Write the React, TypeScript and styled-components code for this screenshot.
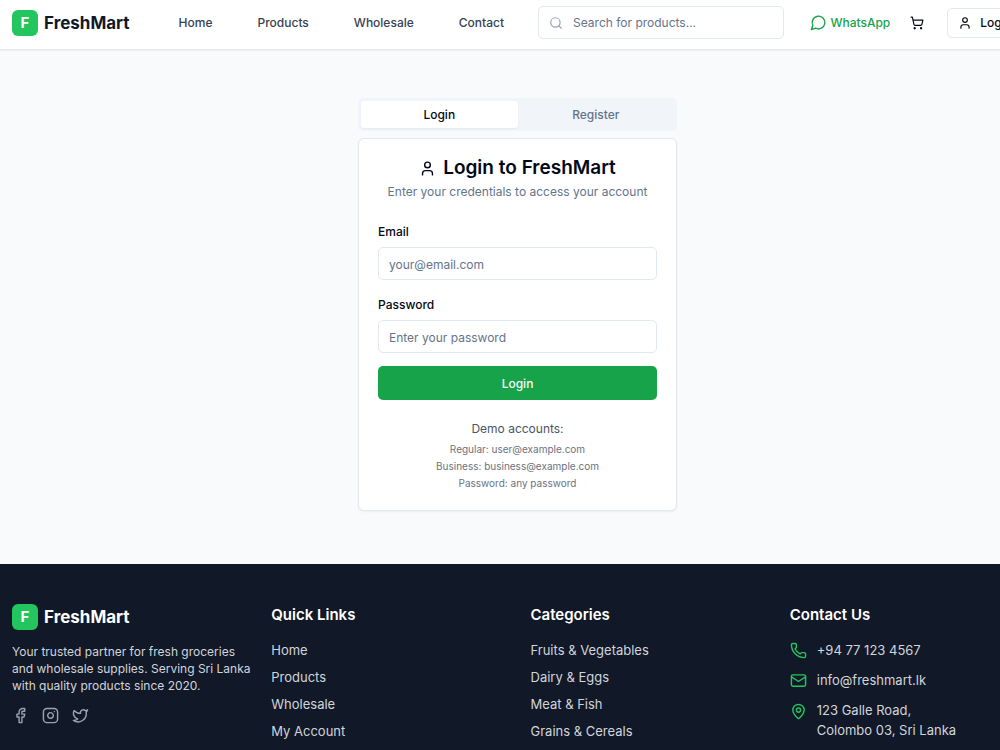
import React from "react";
import styled, { createGlobalStyle } from "styled-components";
import {
  Facebook,
  Instagram,
  Mail,
  MapPin,
  Phone,
  Search,
  ShoppingCart,
  Twitter,
  User,
} from "lucide-react";

const GlobalStyle = createGlobalStyle`
  *, *::before, *::after { box-sizing: border-box; }
  body {
    margin: 0;
    overflow-x: hidden;
    background: #f8fafc;
    color: #020817;
    font-family: Inter, "Liberation Sans", sans-serif;
    font-size: 12px;
    line-height: 17px;
  }
  h1, h2, p, ul { margin: 0; padding: 0; }
  ul { list-style: none; }
  a { color: inherit; text-decoration: none; }
  button, input { font: inherit; color: inherit; }
  svg { display: block; flex-shrink: 0; }
`;

const Page = styled.div`
  min-width: 1035px;
`;

const Header = styled.header`
  display: flex;
  align-items: center;
  height: 50px;
  padding: 0 12px 4px;
  background: #ffffff;
  border-bottom: 1px solid #e5e7eb;
  box-shadow: 0 1px 2px rgba(0, 0, 0, 0.05);
`;

const Brand = styled.a<{ $light?: boolean }>`
  display: flex;
  align-items: center;
  gap: 6px;
  color: ${(p) => (p.$light ? "#ffffff" : "#111827")};
  font-size: 17px;
  font-weight: 700;
  line-height: 24px;
`;

const BrandMark = styled.span`
  display: grid;
  place-items: center;
  width: 26px;
  height: 26px;
  border-radius: 6px;
  background: #22c55e;
  color: #ffffff;
  font-size: 15px;
`;

const Nav = styled.nav`
  display: flex;
  gap: 45px;
  margin: 0 34px 0 49px;
  color: #374151;
  font-weight: 500;
`;

const SearchBox = styled.label`
  display: flex;
  flex: 1;
  align-items: center;
  gap: 10px;
  height: 33px;
  padding: 0 10px;
  border: 1px solid #e2e8f0;
  border-radius: 5px;
  color: #9ca3af;
`;

const SearchInput = styled.input`
  flex: 1;
  min-width: 0;
  padding: 0;
  border: 0;
  outline: 0;
  background: transparent;
  color: #020817;
  &::placeholder { color: #64748b; opacity: 1; }
`;

const Actions = styled.div`
  display: flex;
  align-items: center;
  margin-left: 26px;
`;

const WhatsApp = styled.a`
  display: flex;
  align-items: center;
  gap: 3px;
  color: #16a34a;
  font-weight: 500;
`;

const CartButton = styled.button`
  display: grid;
  place-items: center;
  width: 34px;
  height: 30px;
  margin: 0 13px 0 10px;
  padding: 0;
  border: 0;
  background: transparent;
`;

const AccountButton = styled.button`
  display: flex;
  align-items: center;
  gap: 8px;
  height: 30px;
  padding: 0 10px;
  border: 1px solid #e2e8f0;
  border-radius: 5px;
  background: #ffffff;
  font-weight: 500;
`;

const Main = styled.main`
  display: flex;
  flex-direction: column;
  gap: 7px;
  width: 319px;
  margin: 0 auto;
  padding: 48px 0 53px;
`;

const Tabs = styled.div`
  display: grid;
  grid-template-columns: 1fr 1fr;
  height: 33px;
  padding: 3px;
  border-radius: 5px;
  background: #f1f5f9;
`;

const Tab = styled.button<{ $active?: boolean }>`
  padding: 0;
  border: 0;
  border-radius: 3px;
  background: ${(p) => (p.$active ? "#ffffff" : "transparent")};
  box-shadow: ${(p) => (p.$active ? "0 1px 2px rgba(0, 0, 0, 0.05)" : "none")};
  color: ${(p) => (p.$active ? "#020817" : "#64748b")};
  font-weight: 500;
`;

const Card = styled.section`
  padding: 19px 19px 18px;
  border: 1px solid #e2e8f0;
  border-radius: 6px;
  background: #ffffff;
  box-shadow: 0 1px 2px rgba(0, 0, 0, 0.05);
`;

const CardHead = styled.div`
  display: flex;
  flex-direction: column;
  align-items: center;
  gap: 5px;
  margin-bottom: 20px;
  color: #64748b;
`;

const CardTitle = styled.h1`
  display: flex;
  align-items: center;
  gap: 7px;
  color: #020817;
  font-size: 19px;
  font-weight: 600;
  line-height: 20px;
`;

const Form = styled.form`
  display: flex;
  flex-direction: column;
  gap: 13px;
`;

const Field = styled.div`
  display: flex;
  flex-direction: column;
  gap: 6px;
`;

const Label = styled.label`
  padding-top: 2px;
  font-weight: 500;
  line-height: 19px;
`;

const TextInput = styled.input`
  width: 100%;
  height: 33px;
  padding: 1px 10px 0;
  border: 1px solid #e2e8f0;
  border-radius: 5px;
  background: #ffffff;
  &::placeholder { color: #64748b; opacity: 1; }
`;

const Submit = styled.button`
  height: 34px;
  padding: 0;
  border: 0;
  border-radius: 5px;
  background: #16a34a;
  color: #f8fafc;
  font-weight: 500;
`;

const Demo = styled.div`
  margin-top: 20px;
  color: #4b5563;
  text-align: center;
`;

const DemoList = styled.ul`
  margin-top: 4px;
  color: #6b7280;
  font-size: 10px;
`;

const Footer = styled.footer`
  display: grid;
  grid-template-columns: repeat(4, 1fr);
  gap: 26px;
  padding: 40px 12px 9px;
  background: #111827;
  color: #d1d5db;
  border-bottom: 1px solid #030712;
`;

const About = styled.div`
  display: flex;
  flex-direction: column;
  gap: 13px;
  min-width: 0;
  white-space: nowrap;
`;

const Socials = styled.div`
  display: flex;
  gap: 13px;
  color: #9ca3af;
`;

const FooterTitle = styled.h2`
  margin-bottom: 15px;
  color: #ffffff;
  font-size: 15px;
  font-weight: 600;
  line-height: 21px;
`;

const FooterList = styled.ul<{ $gap: number }>`
  display: flex;
  flex-direction: column;
  gap: ${(p) => p.$gap}px;
  font-size: 13px;
  line-height: 20px;
`;

const ContactItem = styled.li<{ $top?: boolean }>`
  display: flex;
  align-items: ${(p) => (p.$top ? "flex-start" : "center")};
  gap: 10px;
  svg {
    margin-top: ${(p) => (p.$top ? 3 : 0)}px;
    color: #22c55e;
  }
`;

const quickLinks = ["Home", "Products", "Wholesale", "My Account"];
const categories = ["Fruits & Vegetables", "Dairy & Eggs", "Meat & Fish", "Grains & Cereals"];

function Logo({ light }: { light?: boolean }) {
  return (
    <Brand href="#" $light={light}>
      <BrandMark>F</BrandMark>
      FreshMart
    </Brand>
  );
}

function ChatIcon() {
  return (
    <svg
      width="17"
      height="17"
      viewBox="0 0 24 24"
      fill="none"
      stroke="currentColor"
      strokeWidth="2"
      strokeLinecap="round"
      strokeLinejoin="round"
      aria-hidden="true"
    >
      <path d="M7.9 20A9 9 0 1 0 4 16.1L2 22Z" />
    </svg>
  );
}

function LinkColumn({ title, links }: { title: string; links: string[] }) {
  return (
    <div>
      <FooterTitle>{title}</FooterTitle>
      <FooterList $gap={7}>
        {links.map((text) => (
          <li key={text}>
            <a href="#">{text}</a>
          </li>
        ))}
      </FooterList>
    </div>
  );
}

export default function App() {
  return (
    <>
      <GlobalStyle />
      <Page>
        <Header>
          <Logo />
          <Nav>
            {["Home", "Products", "Wholesale", "Contact"].map((text) => (
              <a href="#" key={text}>
                {text}
              </a>
            ))}
          </Nav>
          <SearchBox>
            <Search size={14} />
            <SearchInput type="search" aria-label="Search" placeholder="Search for products..." />
          </SearchBox>
          <Actions>
            <WhatsApp href="#">
              <ChatIcon />
              WhatsApp
            </WhatsApp>
            <CartButton type="button" aria-label="Cart">
              <ShoppingCart size={14} />
            </CartButton>
            <AccountButton type="button">
              <User size={14} />
              Login
            </AccountButton>
          </Actions>
        </Header>

        <Main>
          <Tabs role="tablist">
            <Tab type="button" role="tab" aria-selected="true" $active>
              Login
            </Tab>
            <Tab type="button" role="tab" aria-selected="false">
              Register
            </Tab>
          </Tabs>
          <Card>
            <CardHead>
              <CardTitle>
                <User size={17} />
                Login to FreshMart
              </CardTitle>
              <p>Enter your credentials to access your account</p>
            </CardHead>
            <Form onSubmit={(e) => e.preventDefault()}>
              <Field>
                <Label htmlFor="email">Email</Label>
                <TextInput id="email" type="email" placeholder="your@email.com" />
              </Field>
              <Field>
                <Label htmlFor="password">Password</Label>
                <TextInput id="password" type="password" placeholder="Enter your password" />
              </Field>
              <Submit type="submit">Login</Submit>
            </Form>
            <Demo>
              <p>Demo accounts:</p>
              <DemoList>
                <li>Regular: user@example.com</li>
                <li>Business: business@example.com</li>
                <li>Password: any password</li>
              </DemoList>
            </Demo>
          </Card>
        </Main>

        <Footer>
          <About>
            <Logo light />
            <p>
              Your trusted partner for fresh groceries
              <br />
              and wholesale supplies. Serving Sri Lanka
              <br />
              with quality products since 2020.
            </p>
            <Socials>
              <a href="#" aria-label="Facebook">
                <Facebook size={17} />
              </a>
              <a href="#" aria-label="Instagram">
                <Instagram size={17} />
              </a>
              <a href="#" aria-label="Twitter">
                <Twitter size={17} />
              </a>
            </Socials>
          </About>
          <LinkColumn title="Quick Links" links={quickLinks} />
          <LinkColumn title="Categories" links={categories} />
          <div>
            <FooterTitle>Contact Us</FooterTitle>
            <FooterList $gap={10}>
              <ContactItem>
                <Phone size={17} />
                +94 77 123 4567
              </ContactItem>
              <ContactItem>
                <Mail size={17} />
                info@freshmart.lk
              </ContactItem>
              <ContactItem $top>
                <MapPin size={17} />
                <span>
                  123 Galle Road,
                  <br />
                  Colombo 03, Sri Lanka
                </span>
              </ContactItem>
            </FooterList>
          </div>
        </Footer>
      </Page>
    </>
  );
}
